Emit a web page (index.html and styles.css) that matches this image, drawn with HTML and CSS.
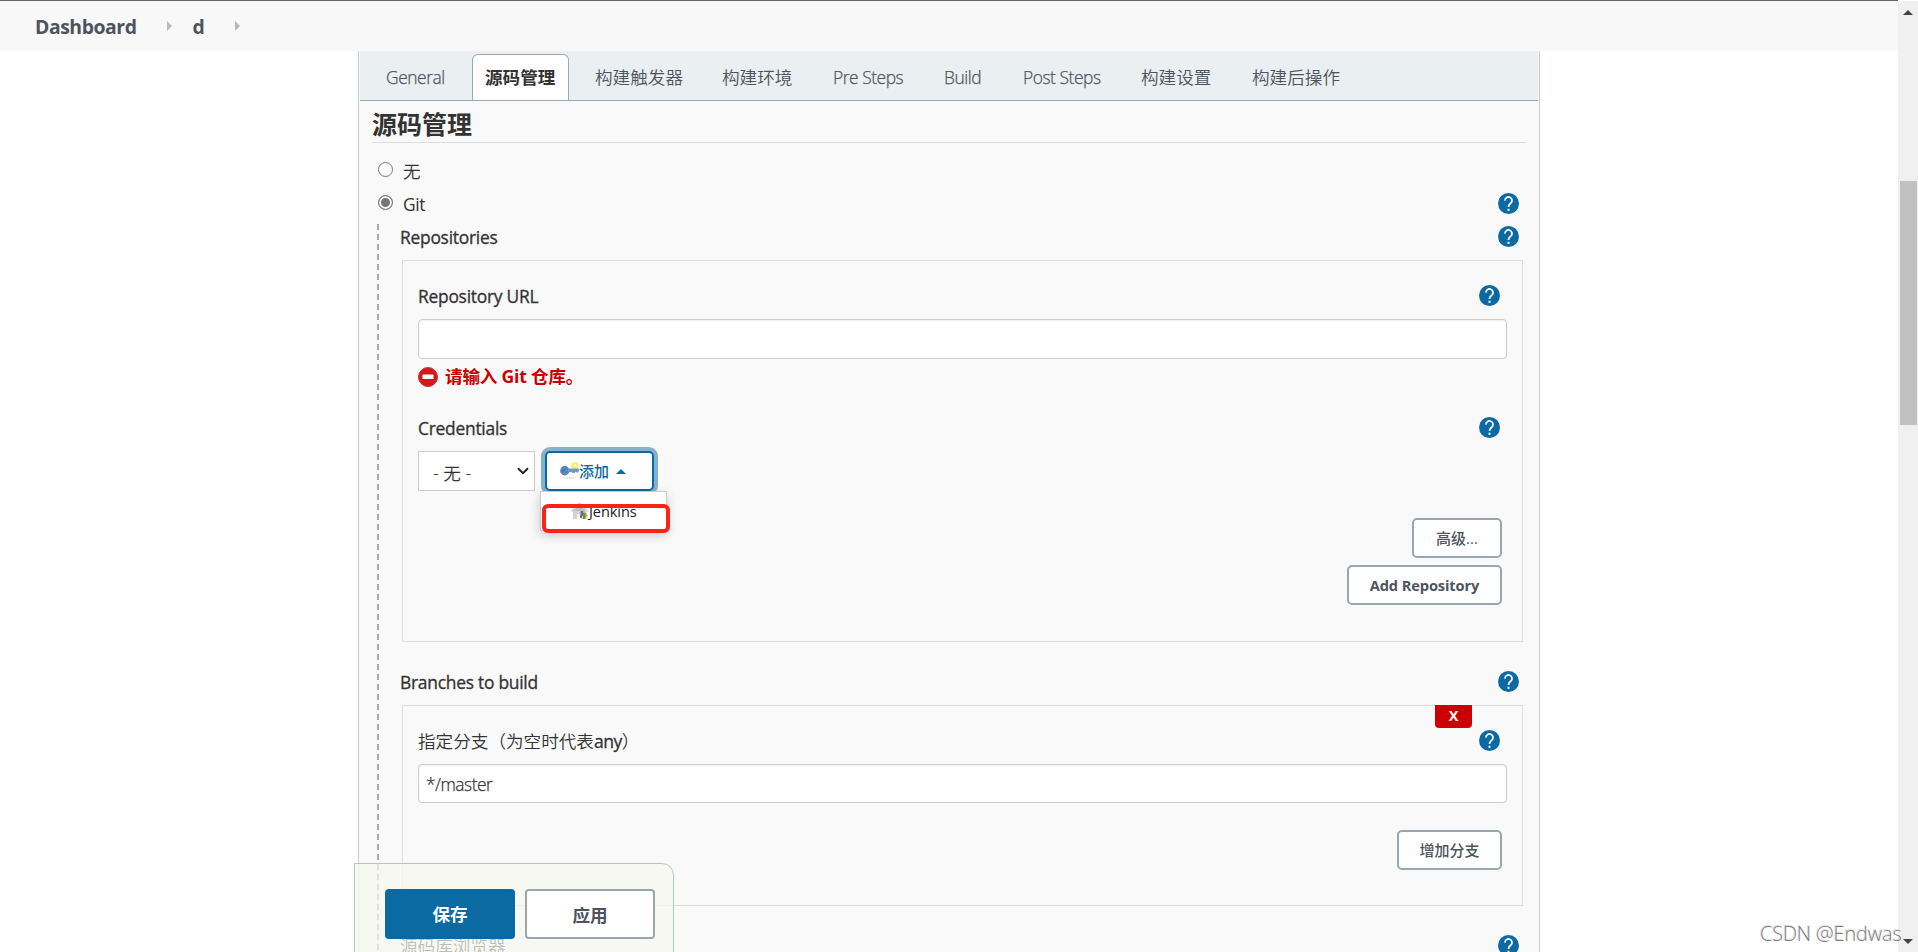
FILE: index.html
```
<!DOCTYPE html>
<html lang="zh-CN">
<head>
	<meta charset="UTF-8">
	<title>d Config [Jenkins]</title>
	<link rel="stylesheet" href="styles.css">
</head>
<body>
	<svg width="0" height="0" class="defs">
		<symbol id="help" viewBox="0 0 24 24">
			<circle cx="12" cy="12" r="12" fill="#0b6aa2"/>
			<path d="M8 8.700a4 4 0 1 1 6.800 2.700c-1.500 1.400-2.800 2.100-2.800 4.500" fill="none" stroke="#fff" stroke-width="2"/>
			<rect x="10.900" y="18" width="2.200" height="2.400" fill="#fff"/>
		</symbol>
	</svg>
	<div class="page">
		<div class="breadcrumb">
			<a class="crumb">Dashboard</a><i class="sep"></i>
			<a class="crumb">d</a><i class="sep"></i>
		</div>
		<div class="panel">
			<div class="tabBar">
				<a class="tab w1">General</a>
				<a class="tab active">源码管理</a>
				<a class="tab w2">构建触发器</a>
				<a class="tab w3">构建环境</a>
				<a class="tab w4">Pre Steps</a>
				<a class="tab w5">Build</a>
				<a class="tab w6">Post Steps</a>
				<a class="tab w7">构建设置</a>
				<a class="tab">构建后操作</a>
			</div>
			<h2 class="section">源码管理</h2>
			<div class="radioRow"><i class="radio"></i><span class="cn">无</span></div>
			<div class="radioRow"><i class="radio checked"></i><span>Git</span><svg class="help"><use href="#help"/></svg></div>
			<div class="nested">
				<div class="row"><span class="label">Repositories</span><svg class="help"><use href="#help"/></svg></div>
				<div class="box repo">
					<div class="row"><span class="label">Repository URL</span><svg class="help"><use href="#help"/></svg></div>
					<div class="input"></div>
					<div class="error">
						<svg width="20" height="20" viewBox="0 0 20 20"><circle cx="10" cy="10" r="9.500" fill="#d8171b" stroke="#b23a3a"/><rect x="4.500" y="7.500" width="11" height="4.500" rx=".8" fill="#fff"/></svg>
						<span>请输入 Git 仓库。</span>
					</div>
					<div class="row"><span class="label">Credentials</span><svg class="help"><use href="#help"/></svg></div>
					<div class="creds">
						<div class="select"><span>- 无 -</span><svg width="12" height="8" viewBox="0 0 12 8"><path d="M1 1.200l5 5 5-5" fill="none" stroke="#222" stroke-width="2"/></svg></div>
						<div class="addWrap">
							<div class="btn add">
								<svg width="19" height="18" viewBox="0 0 19 18">
									<ellipse cx="9" cy="16" rx="7" ry="1" fill="#e9e9e9"/>
									<circle cx="15" cy="3.500" r="3.500" fill="#f7ee62"/><circle cx="15" cy="3.500" r="1.200" fill="#fffbd0"/>
									<ellipse cx="4.800" cy="8.700" rx="4.700" ry="4.700" fill="#5b86bd"/><path d="M8 6.500h10.500l.5 2-1 2h-1.500l-1-1-1 1.500h-2l-1-1H8z" fill="#6b97cc"/><circle cx="3.500" cy="8.500" r="1.200" fill="#466fa5"/>
								</svg><span>添加</span><i class="up"></i>
							</div>
							<div class="menu">
								<svg width="19" height="18" viewBox="0 0 19 18">
									<path d="M0 9.500L9.500 0 19 9.500h-2.500V17h-5v-5h-4v5H3V9.500z" fill="#d3d3d1"/><path d="M3 9L9.500 3l6 6z" fill="#bcbdbc"/>
									<rect x="10.500" y="9" width="3" height="5" fill="#4a78b8"/><path d="M13.500 8l4.500 6-4.500 3z" fill="#e0b42c"/><rect x="13" y="11" width="2.500" height="6" fill="#4c9a55"/><rect x="10" y="13" width="2" height="3" fill="#c94b4b"/>
								</svg><span>Jenkins</span>
							</div>
							<div class="mark"></div>
						</div>
					</div>
					<div class="actions">
						<div class="btn b1">高级...</div>
						<div class="btn b2">Add Repository</div>
					</div>
				</div>
				<div class="row branches"><span class="label">Branches to build</span><svg class="help"><use href="#help"/></svg></div>
				<div class="box branch">
					<div class="del">X</div>
					<div class="row"><span class="label cn">指定分支（为空时代表<b>any</b>）</span><svg class="help"><use href="#help"/></svg></div>
					<div class="input"><span>*/master</span></div>
					<div class="actions"><div class="btn b3">增加分支</div></div>
				</div>
				<div class="row browser"><span class="label cn">源码库浏览器</span><svg class="help"><use href="#help"/></svg></div>
			</div>
		</div>
	</div>
	<div class="saveBar">
		<div class="save">保存</div>
		<div class="apply">应用</div>
	</div>
	<div class="scrollbar"><i class="arrowUp"></i><i class="thumb"></i><i class="arrowDown"></i></div>
	<div class="watermark">CSDN @Endwas</div>
</body>
</html>
```
FILE: styles.css
```
* { margin: 0; padding: 0; box-sizing: border-box; }
body { height: 952px; overflow: hidden; background: #fff; color: #333; font: 17.4px/24px "Open Sans", "Noto Sans CJK SC", sans-serif; letter-spacing: -.4px; white-space: nowrap; position: relative; }
i { font-style: normal; display: block; }
.defs { position: absolute; }
.page { width: 1898px; height: 952px; overflow: hidden; }

.breadcrumb { height: 51px; width: 1918px; border-top: 1px solid #666; background: #f8f8f8; padding-left: 35px; display: flex; align-items: center; color: #4d545d; font-size: 19.4px; font-weight: 700; letter-spacing: -.45px; }
.crumb { padding-top: 1px; }
.sep { border: 5px solid transparent; border-left-color: #b9b9b9; border-right: 0; margin: 0 20px 0 31px; }

.panel { width: 1182px; height: 1000px; margin-left: 358px; border: 1px solid #ccc; border-top: 0; background: #f9f9f9; }
.tabBar { height: 50px; margin: 0 1px; background: #eaeff2; border-bottom: 1px solid #98aab5; display: flex; align-items: flex-end; color: #4d545d; }
.tab { height: 46px; line-height: 46px; font-size: 17.6px; font-weight: 350; letter-spacing: 0; }
.w1 { width: 86px; margin-left: 26px; }
.active { width: 97px; margin-right: 26px; padding-left: 12px; background: #fff; border: 1px solid #98aab5; border-bottom: 0; border-radius: 6px 6px 0 0; color: #333; font-weight: 700; line-height: 44px; }
.w2 { width: 127px; }
.w3 { width: 111px; }
.w4 { width: 111px; }
.w5 { width: 79px; }
.w6 { width: 118px; }
.w7 { width: 111px; }
.w1, .w4, .w5, .w6 { font-weight: 350; font-size: 17.4px; letter-spacing: -.45px; -webkit-text-stroke: .25px; }

.section { width: 1154px; height: 42px; margin: 0 0 10px 13px; border-bottom: 1px solid #ddd; font-size: 25px; line-height: 46px; font-weight: 700; letter-spacing: 0; }
.radioRow { height: 33px; padding: 0 20px 0 19px; display: flex; align-items: center; }
.radioRow span { margin: 3px auto 0 10px; }
.radioRow .help { margin-top: 2px; }
.radio { width: 15px; height: 15px; border: 1px solid #767676; border-radius: 50%; background: #fff; }
.checked { background: #767676; box-shadow: inset 0 0 0 2px #fff; }
.cn { font-size: 17.6px; font-weight: 350; }
.help { width: 21px; height: 21px; flex: none; }
.nested { margin: 5px 0 0 18px; padding-left: 23px; background: repeating-linear-gradient(#aaa 0 6px, transparent 6px 10px) 0 0/2px 100% no-repeat; }
.row { height: 24px; padding-right: 20px; display: flex; align-items: center; justify-content: space-between; }
.label { letter-spacing: -.25px; margin-top: 2px; -webkit-text-stroke: .3px #333; }
.label.cn { letter-spacing: 0; -webkit-text-stroke: 0; }
.label b { font-weight: 500; -webkit-text-stroke: .3px #333; letter-spacing: -.5px; }
.box { width: 1121px; margin: 12px 0 0 2px; border: 1px solid #ddd; padding: 22px 15px 0; position: relative; }
.box .row { padding-right: 7px; }
.repo { height: 382px; }
.branch { height: 201px; }
.input { width: 1089px; height: 40px; margin-top: 12px; border: 1px solid #ccc; border-radius: 4px; background: #fff; box-shadow: inset 0 1px 2px #0001; padding: 0 7px; line-height: 39px; letter-spacing: -.5px; font-weight: 350; -webkit-text-stroke: .25px; }
.branch .input { height: 39px; }
.error { height: 20px; margin: 8px 0 28px; display: flex; align-items: center; gap: 7px; color: #c00; font-size: 17.6px; font-weight: 700; letter-spacing: -.2px; }
.error span { margin-top: -2px; }
.creds { display: flex; height: 40px; margin-top: 12px; }
.select { width: 117px; margin-right: 10px; border: 1px solid #ccc; background: #fff; display: flex; align-items: center; justify-content: space-between; padding: 3px 5px 0 14px; font-weight: 350; font-size: 17.6px; letter-spacing: 0; }
.select svg { margin-bottom: 3px; }
.btn { height: 40px; border: 2px solid #98a6b0; border-radius: 5px; background: #fff; color: #4d545d; font-size: 15px; font-weight: 500; text-align: center; line-height: 37px; letter-spacing: 0; }
.addWrap { position: relative; }
.add { width: 109px; border-color: #0b6aa2; color: #0b6aa2; box-shadow: 0 0 0 4px #84b1cf; display: flex; align-items: center; padding-left: 13px; }
.up { border: 5px solid transparent; border-bottom-color: #0b6aa2; border-top: 0; margin-left: 7px; }
.menu { position: absolute; left: -5px; top: 40px; width: 127px; height: 40px; background: #fff; border: 1px solid #ccc; box-shadow: 0 4px 10px #0003; display: flex; align-items: flex-start; padding: 10px 0 0 29px; font-size: 14.6px; letter-spacing: -.1px; }
.menu span { line-height: 19px; color: #222; }
.mark { position: absolute; left: -3px; top: 53px; width: 128px; height: 29px; border: 4px solid #ff2313; border-radius: 6px; }
.actions { display: flex; flex-direction: column; align-items: flex-end; gap: 7px; margin: 27px 5px 0 0; }
.b1 { width: 90px; }
.b2 { width: 155px; font-size: 14.6px; font-weight: 700; letter-spacing: -.1px; }
.b3 { width: 105px; }
.branches { margin-top: 27px; }
.del { position: absolute; left: 1032px; top: -1px; width: 37px; height: 23px; border-radius: 0 0 4px 4px; background: #c00; color: #fff; font-size: 14.5px; font-weight: 700; line-height: 22px; text-align: center; }
.browser { margin-top: 27px; }

.saveBar { position: absolute; left: 354px; top: 863px; width: 320px; height: 100px; padding: 25px 0 0 30px; display: flex; gap: 10px; background: rgba(245,248,238,.7); border: 1px solid #a9cfbb; border-radius: 0 12px 0 0; font-size: 17.6px; font-weight: 700; text-align: center; line-height: 51px; letter-spacing: 0; }
.save, .apply { width: 130px; height: 50px; border-radius: 4px; background: #0b6aa2; color: #fff; }
.apply { background: #fff; border: 2px solid #98a6b0; color: #4d545d; line-height: 48px; }
.scrollbar { position: absolute; right: 0; top: 1px; width: 20px; height: 951px; background: #f0f0f0; display: flex; flex-direction: column; align-items: center; }
.arrowUp { margin-top: 9px; border: 5px solid transparent; border-top: 0; border-bottom-color: #444; }
.thumb { width: 17px; height: 244px; margin: 166px 0 514px 1px; background: #c1c1c1; }
.arrowDown { border: 5px solid transparent; border-bottom: 0; border-top-color: #444; }
.watermark { position: absolute; left: 1760px; top: 919px; font-size: 20px; line-height: 30px; font-weight: 350; letter-spacing: -.2px; color: #808080; text-shadow: -1px -1px 0 #ddd; }
```
